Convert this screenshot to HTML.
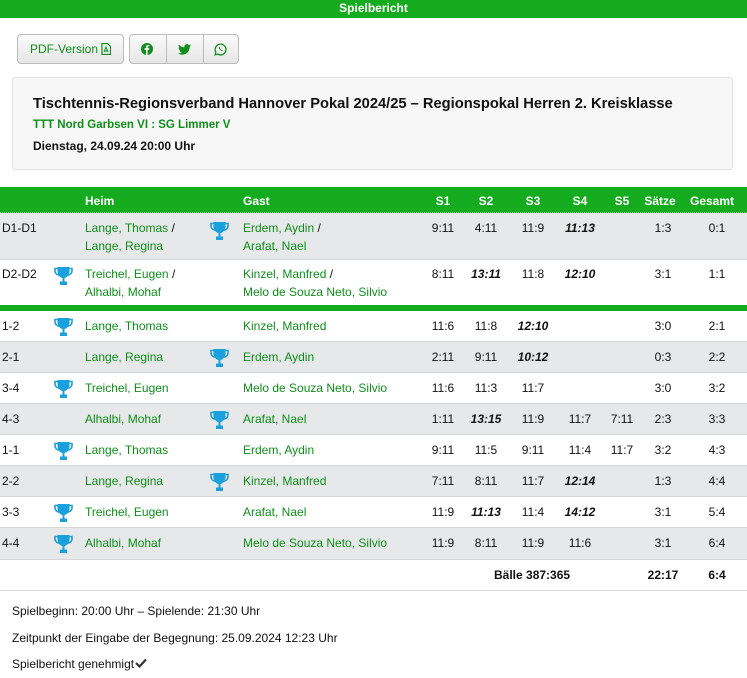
<!DOCTYPE html>
<html><head><meta charset="utf-8"><style>
*{margin:0;padding:0;box-sizing:border-box}
body{width:747px;height:678px;background:#fff;font-family:"Liberation Sans",Arial,sans-serif;font-size:12px;color:#111;position:relative;overflow:hidden}
.a{position:absolute}
.top{left:0;top:0;width:747px;height:18px;background:#14ac1e;color:#fff;font-weight:bold;text-align:center;line-height:17px;font-size:12px}
.btn{border:1px solid #bbb;border-radius:4px;background:linear-gradient(#fafafa,#e6e6e6);height:30px;top:34px}
.g{color:#0f8f1a}
.card{left:12px;top:77px;width:721px;height:93px;background:#f7f7f7;border:1px solid #e2e2e2;border-radius:3px}
.hdr{left:0;top:187px;width:747px;height:26px;background:#14ac1e;color:#fff;font-weight:bold;border-bottom:1px dotted #7fd47f}
.row{left:0;width:747px;border-bottom:1px solid #d6d6d6}
.gr{background:#e6e8e9}
.c{position:absolute;width:50px;text-align:center}
.bi{font-weight:bold;font-style:italic}
.t{position:absolute;width:19px;height:20px}
</style></head><body>
<div class="a top">Spielbericht</div>
<div class="a btn g" style="left:17px;width:107px;line-height:28px;padding-left:12px;font-size:12px">PDF-Version <svg width="10" height="12" viewBox="0 0 10 12" style="vertical-align:-2px"><path d="M1 .5h5.5L9.5 3.5v8H1z" fill="none" stroke="#0f8f1a" stroke-width="1.2"/><path d="M3 9l2-5 2 5M3.5 8h3" stroke="#0f8f1a" fill="none" stroke-width="1"/></svg></div>
<div class="a btn" style="left:129px;width:110px"></div>
<div class="a" style="left:166px;top:35px;width:1px;height:28px;background:#bbb"></div>
<div class="a" style="left:203px;top:35px;width:1px;height:28px;background:#bbb"></div>
<svg class="a" style="left:141px;top:43px" width="12" height="12" viewBox="0 0 12 12"><circle cx="6" cy="6" r="6" fill="#0f8f1a"/><path d="M6.6 12V7h1.5l.3-1.7H6.6v-1c0-.5.2-.8.8-.8h.9V2.1C7.9 2 7.4 2 7 2 5.8 2 5 2.7 5 4v1.3H3.6V7H5v5z" fill="#fff"/></svg>
<svg class="a" style="left:178px;top:44px" width="13" height="11" viewBox="0 0 24 20"><path d="M24 2.4c-.9.4-1.8.6-2.8.8 1-.6 1.8-1.600 2.2-2.7-1 .6-2 1-3.1 1.2C19.3.7 18 0 16.6 0c-2.7 0-4.9 2.2-4.9 4.9 0 .4 0 .8.1 1.1C7.7 5.8 4.1 3.9 1.7.9 1.2 1.7 1 2.5 1 3.4c0 1.7.9 3.2 2.2 4.1-.8 0-1.6-.2-2.2-.6v.1c0 2.4 1.7 4.4 3.900 4.8-.4.1-.8.2-1.3.2-.3 0-.6 0-.9-.1.6 2 2.4 3.4 4.6 3.4-1.7 1.3-3.8 2.1-6.1 2.1-.4 0-.8 0-1.2-.1 2.2 1.4 4.8 2.2 7.5 2.2 9.1 0 14-7.5 14-14v-.6c1-.7 1.8-1.6 2.5-2.5z" fill="#0f8f1a"/></svg>
<svg class="a" style="left:214px;top:43px" width="13" height="13" viewBox="0 0 14 14"><path d="M7 1.2a5.8 5.8 0 0 0-5 8.7L1.2 12.8l3-.8A5.8 5.8 0 1 0 7 1.2z" fill="none" stroke="#0f8f1a" stroke-width="1.4"/><path d="M5 4.5c.3 1.8 1.700 3.6 3.8 4.3l.8-.9-1-.6-.5.4c-.8-.4-1.4-1-1.8-1.8l.4-.5-.6-1z" fill="#0f8f1a"/></svg>
<div class="a card">
<div class="a" style="left:20px;top:18px;font-size:14.7px;font-weight:bold;color:#111;white-space:nowrap">Tischtennis-Regionsverband Hannover Pokal 2024/25 – Regionspokal Herren 2. Kreisklasse</div>
<div class="a g" style="left:20px;top:41px;font-weight:bold;font-size:11.5px">TTT Nord Garbsen VI : SG Limmer V</div>
<div class="a" style="left:20px;top:61px;font-weight:bold">Dienstag, 24.09.24 20:00 Uhr</div>
</div>

<div class="a hdr">
<span class="a" style="left:85px;top:7px">Heim</span>
<span class="a" style="left:243px;top:7px">Gast</span>
<span class="c" style="left:418px;top:7px">S1</span>
<span class="c" style="left:461px;top:7px">S2</span>
<span class="c" style="left:508px;top:7px">S3</span>
<span class="c" style="left:555px;top:7px">S4</span>
<span class="c" style="left:597px;top:7px">S5</span>
<span class="c" style="left:635px;top:7px">Sätze</span>
<span class="c" style="left:687px;top:7px">Gesamt</span>
</div>

<svg width="0" height="0" style="position:absolute"><defs><symbol id="tr" viewBox="0 0 19 20"><path d="M3.5 1h12v4.5c0 3.2-2.3 6-5 6.5v3.5h2.5V19H6v-3.5h2.5V12C5.8 11.5 3.500 8.7 3.5 5.5z" fill="#1aa0dc"/><path d="M4 2.5H1v2.2c0 2.6 2 4.2 4.5 4.5M15 2.5h3v2.2c0 2.6-2 4.2-4.5 4.5" fill="none" stroke="#1aa0dc" stroke-width="1.6"/></symbol></defs></svg>

<div class="a row gr" style="top:213px;height:47px">
<span class="a" style="left:2px;top:8px">D1-D1</span>
<span class="a g" style="left:85px;top:6px;line-height:18px">Lange, Thomas <span style="color:#111">/</span><br>Lange, Regina</span>
<svg class="t" style="left:210px;top:8px"><use href="#tr"/></svg>
<span class="a g" style="left:243px;top:6px;line-height:18px">Erdem, Aydin <span style="color:#111">/</span><br>Arafat, Nael</span>
<span class="c" style="left:418px;top:8px">9:11</span><span class="c" style="left:461px;top:8px">4:11</span><span class="c" style="left:508px;top:8px">11:9</span><span class="c bi" style="left:555px;top:8px">11:13</span><span class="c" style="left:638px;top:8px">1:3</span><span class="c" style="left:692px;top:8px">0:1</span>
</div>
<div class="a row" style="top:260px;height:45px;border:none">
<span class="a" style="left:2px;top:7px">D2-D2</span>
<svg class="t" style="left:54px;top:6px"><use href="#tr"/></svg>
<span class="a g" style="left:85px;top:5px;line-height:18px">Treichel, Eugen <span style="color:#111">/</span><br>Alhalbi, Mohaf</span>
<span class="a g" style="left:243px;top:5px;line-height:18px">Kinzel, Manfred <span style="color:#111">/</span><br>Melo de Souza Neto, Silvio</span>
<span class="c" style="left:418px;top:7px">8:11</span><span class="c bi" style="left:461px;top:7px">13:11</span><span class="c" style="left:508px;top:7px">11:8</span><span class="c bi" style="left:555px;top:7px">12:10</span><span class="c" style="left:638px;top:7px">3:1</span><span class="c" style="left:692px;top:7px">1:1</span>
</div>
<div class="a" style="left:0;top:305px;width:747px;height:6px;background:#14ac1e"></div>

<div class="a row" style="top:311px;height:31px"><span class="a" style="left:2px;top:8px">1-2</span><svg class="t" style="left:54px;top:6px"><use href="#tr"/></svg><span class="a g" style="left:85px;top:8px">Lange, Thomas</span><span class="a g" style="left:243px;top:8px">Kinzel, Manfred</span><span class="c" style="left:418px;top:8px">11:6</span><span class="c" style="left:461px;top:8px">11:8</span><span class="c bi" style="left:508px;top:8px">12:10</span><span class="c" style="left:638px;top:8px">3:0</span><span class="c" style="left:692px;top:8px">2:1</span></div>
<div class="a row gr" style="top:342px;height:31px"><span class="a" style="left:2px;top:8px">2-1</span><span class="a g" style="left:85px;top:8px">Lange, Regina</span><svg class="t" style="left:210px;top:6px"><use href="#tr"/></svg><span class="a g" style="left:243px;top:8px">Erdem, Aydin</span><span class="c" style="left:418px;top:8px">2:11</span><span class="c" style="left:461px;top:8px">9:11</span><span class="c bi" style="left:508px;top:8px">10:12</span><span class="c" style="left:638px;top:8px">0:3</span><span class="c" style="left:692px;top:8px">2:2</span></div>
<div class="a row" style="top:373px;height:31px"><span class="a" style="left:2px;top:8px">3-4</span><svg class="t" style="left:54px;top:6px"><use href="#tr"/></svg><span class="a g" style="left:85px;top:8px">Treichel, Eugen</span><span class="a g" style="left:243px;top:8px">Melo de Souza Neto, Silvio</span><span class="c" style="left:418px;top:8px">11:6</span><span class="c" style="left:461px;top:8px">11:3</span><span class="c" style="left:508px;top:8px">11:7</span><span class="c" style="left:638px;top:8px">3:0</span><span class="c" style="left:692px;top:8px">3:2</span></div>
<div class="a row gr" style="top:404px;height:31px"><span class="a" style="left:2px;top:8px">4-3</span><span class="a g" style="left:85px;top:8px">Alhalbi, Mohaf</span><svg class="t" style="left:210px;top:6px"><use href="#tr"/></svg><span class="a g" style="left:243px;top:8px">Arafat, Nael</span><span class="c" style="left:418px;top:8px">1:11</span><span class="c bi" style="left:461px;top:8px">13:15</span><span class="c" style="left:508px;top:8px">11:9</span><span class="c" style="left:555px;top:8px">11:7</span><span class="c" style="left:597px;top:8px">7:11</span><span class="c" style="left:638px;top:8px">2:3</span><span class="c" style="left:692px;top:8px">3:3</span></div>
<div class="a row" style="top:435px;height:31px"><span class="a" style="left:2px;top:8px">1-1</span><svg class="t" style="left:54px;top:6px"><use href="#tr"/></svg><span class="a g" style="left:85px;top:8px">Lange, Thomas</span><span class="a g" style="left:243px;top:8px">Erdem, Aydin</span><span class="c" style="left:418px;top:8px">9:11</span><span class="c" style="left:461px;top:8px">11:5</span><span class="c" style="left:508px;top:8px">9:11</span><span class="c" style="left:555px;top:8px">11:4</span><span class="c" style="left:597px;top:8px">11:7</span><span class="c" style="left:638px;top:8px">3:2</span><span class="c" style="left:692px;top:8px">4:3</span></div>
<div class="a row gr" style="top:466px;height:31px"><span class="a" style="left:2px;top:8px">2-2</span><span class="a g" style="left:85px;top:8px">Lange, Regina</span><svg class="t" style="left:210px;top:6px"><use href="#tr"/></svg><span class="a g" style="left:243px;top:8px">Kinzel, Manfred</span><span class="c" style="left:418px;top:8px">7:11</span><span class="c" style="left:461px;top:8px">8:11</span><span class="c" style="left:508px;top:8px">11:7</span><span class="c bi" style="left:555px;top:8px">12:14</span><span class="c" style="left:638px;top:8px">1:3</span><span class="c" style="left:692px;top:8px">4:4</span></div>
<div class="a row" style="top:497px;height:31px"><span class="a" style="left:2px;top:8px">3-3</span><svg class="t" style="left:54px;top:6px"><use href="#tr"/></svg><span class="a g" style="left:85px;top:8px">Treichel, Eugen</span><span class="a g" style="left:243px;top:8px">Arafat, Nael</span><span class="c" style="left:418px;top:8px">11:9</span><span class="c bi" style="left:461px;top:8px">11:13</span><span class="c" style="left:508px;top:8px">11:4</span><span class="c bi" style="left:555px;top:8px">14:12</span><span class="c" style="left:638px;top:8px">3:1</span><span class="c" style="left:692px;top:8px">5:4</span></div>
<div class="a row gr" style="top:528px;height:32px"><span class="a" style="left:2px;top:8px">4-4</span><svg class="t" style="left:54px;top:6px"><use href="#tr"/></svg><span class="a g" style="left:85px;top:8px">Alhalbi, Mohaf</span><span class="a g" style="left:243px;top:8px">Melo de Souza Neto, Silvio</span><span class="c" style="left:418px;top:8px">11:9</span><span class="c" style="left:461px;top:8px">8:11</span><span class="c" style="left:508px;top:8px">11:9</span><span class="c" style="left:555px;top:8px">11:6</span><span class="c" style="left:638px;top:8px">3:1</span><span class="c" style="left:692px;top:8px">6:4</span></div>

<div class="a row" style="top:560px;height:31px;font-weight:bold"><span class="a" style="left:494px;top:8px">Bälle 387:365</span><span class="c" style="left:638px;top:8px">22:17</span><span class="c" style="left:692px;top:8px">6:4</span></div>

<div class="a" style="left:12px;top:604px">Spielbeginn: 20:00 Uhr – Spielende: 21:30 Uhr</div>
<div class="a" style="left:12px;top:631px">Zeitpunkt der Eingabe der Begegnung: 25.09.2024 12:23 Uhr</div>
<div class="a" style="left:12px;top:657px">Spielbericht genehmigt<svg width="12" height="10" viewBox="0 0 12 10" style="margin-left:1px"><path d="M1 5l3.5 3.5L11 1.5" fill="none" stroke="#333" stroke-width="2.2"/></svg></div>
</body></html>
